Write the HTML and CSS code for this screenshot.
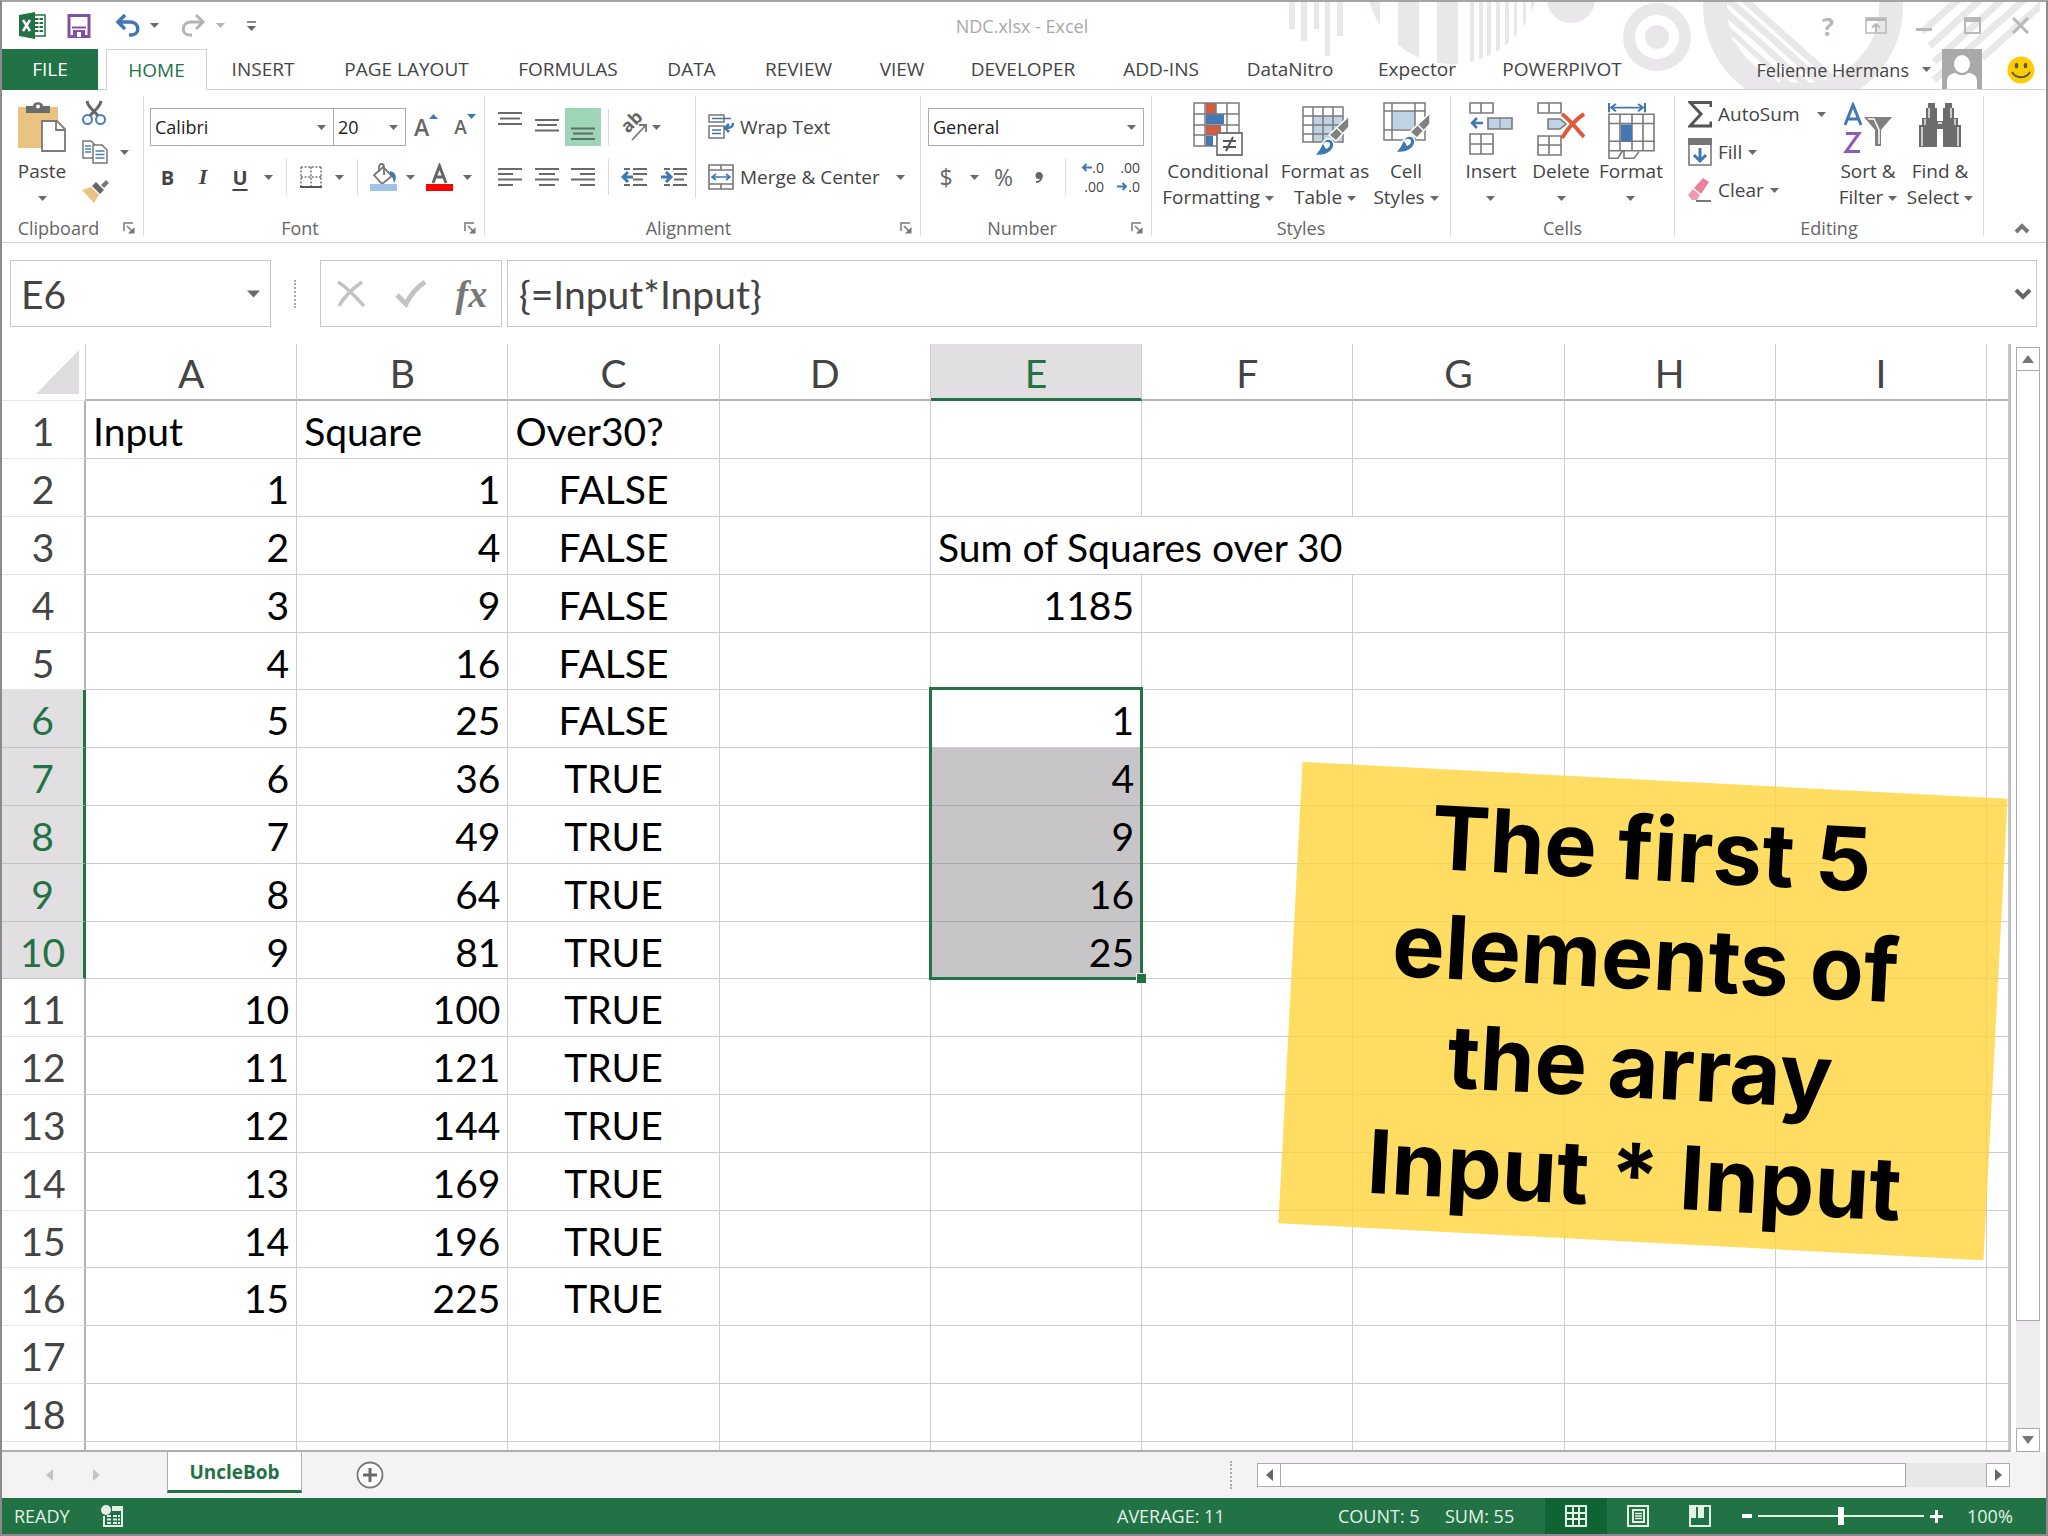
FILE: index.html
```html
<!DOCTYPE html>
<html lang="en">
<head>
<meta charset="utf-8">
<title>NDC.xlsx - Excel</title>
<link rel="stylesheet" href="styles.css">
</head>
<body>
<svg class="defs" width="0" height="0" aria-hidden="true">
  <symbol id="caret" viewBox="0 0 9 5"><path d="M0 0h9L4.500 5z" fill="#6a6a6a"/></symbol>
  <symbol id="launch" viewBox="0 0 12 12"><path d="M1 9V1h9" fill="none" stroke="#777" stroke-width="1.500"/><path d="M4 4l5 5" stroke="#777" stroke-width="1.500"/><path d="M11.500 5v6.500H5z" fill="#777"/></symbol>
</svg>
<div class="app">
  <header class="top">
    <svg class="backdrop" width="770" height="87" viewBox="0 0 770 87" aria-hidden="true">
      <defs>
        <clipPath id="disc"><circle cx="182" cy="-24" r="86"/></clipPath>
        <clipPath id="hole"><circle cx="533" cy="5" r="80"/></clipPath>
      </defs>
      <g fill="#e9e7e9">
        <path d="M19 0h6v27h-6zM31 0h6v39h-6zM44 0h5v27h-5zM55 0h5v54h-5zM67 0h6v34h-6z"/>
        <path clip-path="url(#disc)" d="M96 0h14v60H96zM128 0h21v80h-21zM167 0h21v80h-21zM200 0h4v80h-4zM209 0h4v80h-4zM217 0h4v80h-4zM226 0h4v80h-4zM235 0h4v80h-4zM244 0h3v80h-3zM253 0h3v80h-3zM261 0h3v80h-3z"/>
        <circle cx="301" cy="-3" r="24"/>
      </g>
      <g fill="none" stroke="#e9e7e9">
        <circle cx="387" cy="35" r="28" stroke-width="12"/>
        <circle cx="387" cy="35" r="6" stroke-width="12"/>
        <circle cx="533" cy="5" r="88" stroke-width="24"/>
        <path clip-path="url(#hole)" stroke-width="7" d="M440 12l80 72M440-4l100 90M452-8l110 98M468-8l105 94"/>
        <path stroke-width="7" d="M690-4l-38 34M712-4l-52 48M734-4l-70 64M756-4l-92 82M772 2l-60 54"/>
      </g>
      <path stroke="#fff" stroke-width="3" d="M462 36l48 44M474 32l50 46M492 34l44 40"/>
    </svg>
    <div class="titlebar">
      <div class="quick">
        <svg class="logo" width="28" height="27" viewBox="0 0 28 27" role="img" aria-label="Excel"><path d="M15 3h12v21H15z" fill="#fff" stroke="#217346" stroke-width="1.500"/><path d="M17 7h8M17 11h8M17 15h8M17 19h8" stroke="#217346" stroke-width="2"/><path d="M21 4v19" stroke="#fff"/><path d="M1 3L17 0v27L1 24z" fill="#217346"/><path d="M5 8l7 11M12 8L5 19" stroke="#fff" stroke-width="2.500"/></svg>
        <button class="q-save" aria-label="Save"><svg width="24" height="24" viewBox="0 0 24 24"><path d="M2 1.500h20v21H2z" fill="#fff" stroke="#8151a8" stroke-width="3"/><path d="M5 13.500h14" stroke="#8151a8" stroke-width="2"/><path d="M6 16h12v7H6z" fill="#8151a8"/><path d="M10 18h4v5h-4z" fill="#fff"/></svg></button>
        <button class="q-undo" aria-label="Undo"><svg width="25" height="23" viewBox="0 0 25 23"><path d="M3 8h13c9 1 9 13 0 13h-2" fill="none" stroke="#3f78b3" stroke-width="3.500"/><path d="M10 1L3 8l7 7" fill="none" stroke="#3f78b3" stroke-width="3.500"/></svg><svg width="9" height="5"><use href="#caret"/></svg></button>
        <button class="q-redo" aria-label="Redo"><svg width="25" height="23" viewBox="0 0 25 23"><path d="M22 8H9c-9 1-9 13 0 13h2" fill="none" stroke="#b4b4b4" stroke-width="3"/><path d="M15 1l7 7-7 7" fill="none" stroke="#b4b4b4" stroke-width="3"/></svg><svg class="dim" width="9" height="5"><use href="#caret"/></svg></button>
        <button class="q-more" aria-label="Customize"><svg width="9" height="10" viewBox="0 0 9 10"><path d="M0 1h9" stroke="#666" stroke-width="1.500"/><path d="M0 5h9L4.500 10z" fill="#666"/></svg></button>
      </div>
      <h1>NDC.xlsx - Excel</h1>
      <div class="window-buttons">
        <button aria-label="Help">?</button>
        <button aria-label="Ribbon options"><svg width="22" height="17" viewBox="0 0 22 17"><path d="M1 1h20v15H1z" fill="none" stroke="#b9b7b9" stroke-width="1.500"/><path d="M1 1h20v3H1z" fill="#b9b7b9"/><path d="M11 15V7M7 10.500L11 7l4 3.500" fill="none" stroke="#b9b7b9" stroke-width="2"/></svg></button>
        <button aria-label="Minimize"><svg width="16" height="17"><path d="M0 11h16v3H0z" fill="#b9b7b9"/></svg></button>
        <button aria-label="Maximize"><svg width="17" height="17"><path d="M1 1h15v15H1z" fill="none" stroke="#b9b7b9" stroke-width="2"/><path d="M0 0h17v5H0z" fill="#b9b7b9"/></svg></button>
        <button aria-label="Close"><svg width="17" height="17"><path d="M1 1l15 15M16 1L1 16" stroke="#b9b7b9" stroke-width="3"/></svg></button>
      </div>
    </div>
    <nav class="tabs">
      <a class="file" href="#file">FILE</a>
      <a class="home" href="#home">HOME</a>
      <a href="#insert">INSERT</a>
      <a href="#layout">PAGE LAYOUT</a>
      <a href="#formulas">FORMULAS</a>
      <a href="#data">DATA</a>
      <a href="#review">REVIEW</a>
      <a href="#view">VIEW</a>
      <a href="#developer">DEVELOPER</a>
      <a href="#addins">ADD-INS</a>
      <a href="#datanitro">DataNitro</a>
      <a href="#expector">Expector</a>
      <a href="#powerpivot">POWERPIVOT</a>
      <div class="account">
        <button class="user">Felienne Hermans <svg width="9" height="5"><use href="#caret"/></svg></button>
        <svg width="40" height="40" viewBox="0 0 40 40" role="img" aria-label="Profile"><path d="M0 0h40v40H0z" fill="#aaa8aa"/><ellipse cx="20" cy="15" rx="8" ry="9" fill="#fff"/><path d="M5 40V32c0-6 5-8 9-8 3 3 9 3 12 0 4 0 9 2 9 8v8z" fill="#fff"/></svg>
        <svg class="smiley" width="28" height="28" viewBox="0 0 28 28" role="img" aria-label="Send a smile"><circle cx="14" cy="14" r="13.500" fill="#fc0"/><ellipse cx="9.500" cy="9.500" rx="1.800" ry="2.800" fill="#555"/><ellipse cx="18.500" cy="9.500" rx="1.800" ry="2.800" fill="#555"/><path d="M5 16c4 7 14 7 18 0" fill="none" stroke="#555" stroke-width="1.800"/></svg>
      </div>
    </nav>
  </header>

  <section class="ribbon" aria-label="Home ribbon">
    <div class="group g-clip">
      <div class="body">
        <button class="big"><span class="pic"><svg width="48" height="50" viewBox="0 0 48 50"><path d="M0 5h40v41H0z" fill="#eac282"/><path d="M8 4h7c0-5 10-5 10 0h7v7H8z" fill="#6b6b6b"/><circle cx="20" cy="4.500" r="2" fill="#fff"/><path d="M24 19h15l8 8v22H24z" fill="#fff" stroke="#7a7a7a" stroke-width="1.800"/><path d="M38 19v9h9" fill="none" stroke="#7a7a7a" stroke-width="1.800"/></svg></span>Paste<br><svg width="9" height="5"><use href="#caret"/></svg></button>
        <div class="clip-tools">
          <button aria-label="Cut"><svg width="24" height="26" viewBox="0 0 24 26"><path d="M5 1c1 7 9 11 11 15M19 1C18 8 10 12 8 16" fill="none" stroke="#666" stroke-width="3"/><circle cx="5.500" cy="19.500" r="4.500" fill="none" stroke="#4a7fb8" stroke-width="2"/><circle cx="18.500" cy="19.500" r="4.500" fill="none" stroke="#4a7fb8" stroke-width="2"/></svg></button>
          <button aria-label="Copy"><svg width="26" height="24" viewBox="0 0 26 24"><path d="M1 1h8l4 4v13H1z" fill="#fff" stroke="#777" stroke-width="1.500"/><path d="M3 6h6M3 9h6M3 12h6" stroke="#4a7fb8" stroke-width="1.500"/><path d="M11 5h9l5 5v13H11z" fill="#fff" stroke="#777" stroke-width="1.500"/><path d="M13.500 11h9M13.500 14.500h9M13.500 18h9" stroke="#4a7fb8" stroke-width="1.500"/></svg><svg width="9" height="5"><use href="#caret"/></svg></button>
          <button aria-label="Format painter"><svg width="28" height="24" viewBox="0 0 28 24"><path d="M0 11l9-3 8 8-5 8z" fill="#eac282"/><path d="M10 7l4-4 8 8-4 4z" fill="#666"/><path d="M19 6l5-5 3 3-5 5z" fill="#777"/></svg></button>
        </div>
      </div>
      <div class="label"><span>Clipboard</span><button aria-label="Clipboard settings"><svg width="12" height="12"><use href="#launch"/></svg></button></div>
    </div>

    <div class="group g-font">
      <div class="body rows">
        <div class="row font-a">
          <span class="combo"><select aria-label="Font"><option>Calibri</option></select><svg width="9" height="5"><use href="#caret"/></svg></span>
          <span class="combo"><select aria-label="Font size"><option>20</option></select><svg width="9" height="5"><use href="#caret"/></svg></span>
          <button class="grow" aria-label="Increase font size">A<svg width="9" height="5" viewBox="0 0 9 5"><path d="M0 5h9L4.500 0z" fill="#3f78b3"/></svg></button>
          <button class="shrink" aria-label="Decrease font size">A<svg width="9" height="5" viewBox="0 0 9 5"><path d="M0 0h9L4.500 5z" fill="#3f78b3"/></svg></button>
        </div>
        <div class="row font-b">
          <button><b>B</b></button>
          <button><i>I</i></button>
          <button><u>U</u></button>
          <button aria-label="Underline style"><svg width="9" height="5"><use href="#caret"/></svg></button>
          <span class="sep"></span>
          <button aria-label="Borders"><svg width="22" height="22" viewBox="0 0 22 22"><path d="M1 1h20M1 11h20M1 1v19M11 1v19M21 1v19" stroke="#777" stroke-width="1.500" stroke-dasharray="2 1.600"/><path d="M0 21h22" stroke="#555" stroke-width="2"/></svg></button>
          <button aria-label="Border style"><svg width="9" height="5"><use href="#caret"/></svg></button>
          <span class="sep"></span>
          <button aria-label="Fill color"><svg width="27" height="28" viewBox="0 0 27 28"><path d="M13 4l9 9-10 8-8-9z" fill="#fff" stroke="#777" stroke-width="1.800"/><path d="M9 9V4c0-4 5-4 5 0v8" fill="none" stroke="#777" stroke-width="1.800"/><path d="M20 8c7 1 7 8 4 12-1-5-2-7-4-8z" fill="#3f78b3"/><path d="M0 21h27v7H0z" fill="#9dc3e6"/></svg></button>
          <button aria-label="Fill colors"><svg width="9" height="5"><use href="#caret"/></svg></button>
          <button aria-label="Font color"><svg width="27" height="28" viewBox="0 0 27 28"><path d="M7 20l6.500-17L20 20M9 14h9" fill="none" stroke="#666" stroke-width="3"/><path d="M0 21h27v7H0z" fill="#f00"/></svg></button>
          <button aria-label="Font colors"><svg width="9" height="5"><use href="#caret"/></svg></button>
        </div>
      </div>
      <div class="label"><span>Font</span><button aria-label="Font settings"><svg width="12" height="12"><use href="#launch"/></svg></button></div>
    </div>

    <div class="group g-align">
      <div class="body">
        <div class="rows align-left">
          <div class="row align-a">
            <button aria-label="Top align"><svg width="24" height="38" viewBox="0 0 24 38"><path d="M0 5h24M2 10.500h20M0 16h24" stroke="#6a6a6a" stroke-width="2"/></svg></button>
            <button aria-label="Middle align"><svg width="24" height="38" viewBox="0 0 24 38"><path d="M0 12h24M2 17h20M0 22.500h24" stroke="#6a6a6a" stroke-width="2"/></svg></button>
            <button class="on" aria-label="Bottom align"><svg width="24" height="38" viewBox="0 0 24 38"><path d="M0 20.500h24M2 25.500h20M0 31h24" stroke="#5f6f66" stroke-width="2"/></svg></button>
            <span class="sep"></span>
            <button class="orient" aria-label="Orientation"><svg width="32" height="34" viewBox="-2 -5 32 34"><text x="0" y="0" transform="translate(8 19) rotate(-45)" class="ab">ab</text><path d="M12 25L26 10M19 10h7v7" fill="none" stroke="#777" stroke-width="1.800"/></svg></button>
            <button class="start" aria-label="Orientations"><svg width="9" height="5"><use href="#caret"/></svg></button>
          </div>
          <div class="row align-a">
            <button aria-label="Align left"><svg width="24" height="20" viewBox="0 0 24 20"><path d="M0 2h24M0 7h15M0 12.500h24M0 18h15" stroke="#6a6a6a" stroke-width="2"/></svg></button>
            <button aria-label="Center"><svg width="24" height="20" viewBox="0 0 24 20"><path d="M0 2h24M4 7h16M0 12.500h24M4 18h16" stroke="#6a6a6a" stroke-width="2"/></svg></button>
            <button aria-label="Align right"><svg width="24" height="20" viewBox="0 0 24 20"><path d="M0 2h24M9 7h15M0 12.500h24M9 18h15" stroke="#6a6a6a" stroke-width="2"/></svg></button>
            <span class="sep"></span>
            <button aria-label="Decrease indent"><svg width="26" height="20" viewBox="0 0 26 20"><path d="M3 2h6M12 2h14M12 7h14M12 12.500h10M3 18h6M12 18h14" stroke="#6a6a6a" stroke-width="2"/><path d="M12 10H2M7 5l-5 5 5 5" fill="none" stroke="#3f78b3" stroke-width="3"/></svg></button>
            <button aria-label="Increase indent"><svg width="26" height="20" viewBox="0 0 26 20"><path d="M3 2h6M12 2h14M13 7h13M13 12.500h10M3 18h6M12 18h14" stroke="#6a6a6a" stroke-width="2"/><path d="M0 10h10M5 5l5 5-5 5" fill="none" stroke="#3f78b3" stroke-width="3"/></svg></button>
          </div>
        </div>
        <div class="rows align-right">
          <div class="row"><button class="wide"><svg width="26" height="26" viewBox="0 0 26 26"><path d="M1 1h15v7H1zM1 12h15v12H1z" fill="#fff" stroke="#777" stroke-width="1.500"/><path d="M4 4.500h19M4 16h9M4 19.500h9" stroke="#3f78b3" stroke-width="1.500"/><path d="M25 9c0 4-2 5-7 5M21 10l-4 4 4 4" fill="none" stroke="#3f78b3" stroke-width="2.500"/></svg>Wrap Text</button></div>
          <div class="row"><button class="wide"><svg width="26" height="26" viewBox="0 0 26 26"><path d="M1 1h24v24H1zM1 6h24M1 20h24M13 1v5M13 20v5" fill="none" stroke="#777" stroke-width="1.600"/><path d="M5 13h16M8 10l-4 3 4 3M18 10l4 3-4 3" fill="none" stroke="#3f78b3" stroke-width="1.600"/></svg>Merge &amp; Center</button><button class="merge-more" aria-label="Merge options"><svg width="9" height="5"><use href="#caret"/></svg></button></div>
        </div>
      </div>
      <div class="label"><span>Alignment</span><button aria-label="Alignment settings"><svg width="12" height="12"><use href="#launch"/></svg></button></div>
    </div>

    <div class="group g-num">
      <div class="body rows">
        <div class="row"><span class="combo full"><select aria-label="Number format"><option>General</option></select><svg width="9" height="5"><use href="#caret"/></svg></span></div>
        <div class="row num-b">
          <button class="sign">$</button>
          <button aria-label="Currencies"><svg width="9" height="5"><use href="#caret"/></svg></button>
          <button class="sign">%</button>
          <button class="comma" aria-label="Comma style"><svg width="8" height="11" viewBox="0 0 8 11"><circle cx="4" cy="3.500" r="3.500" fill="#666"/><path d="M7 3c0 5-3 7-6 7" fill="none" stroke="#666" stroke-width="2"/></svg></button>
          <span class="sep"></span>
          <button class="dec"><span><svg width="11" height="9" viewBox="0 0 11 9"><path d="M11 4.500H2M5.500 1L2 4.500 5.500 8" fill="none" stroke="#3f78b3" stroke-width="2"/></svg>.0</span><span>.00</span></button>
          <button class="dec"><span>.00</span><span><svg width="11" height="9" viewBox="0 0 11 9"><path d="M0 4.500h9M5.500 1L9 4.500 5.500 8" fill="none" stroke="#3f78b3" stroke-width="2"/></svg>.0</span></button>
        </div>
      </div>
      <div class="label"><span>Number</span><button aria-label="Number settings"><svg width="12" height="12"><use href="#launch"/></svg></button></div>
    </div>

    <div class="group g-styles">
      <div class="body">
        <button class="big"><span class="pic"><svg width="50" height="54" viewBox="0 0 50 54"><path d="M1 1h45v43H1z" fill="#fff"/><path d="M13 1h10v11H13zM13 23h15v10H13z" fill="#d35b40"/><path d="M13 12h18v10H13zM13 34h7v10h-7z" fill="#4478b0"/><path d="M1 1h45v43H1zM1 12h45M1 23h45M1 33h45M12 1v43M34 1v43M23 1v11" fill="none" stroke="#7a7a7a" stroke-width="1.500"/><path d="M24 31h25v22H24z" fill="#fff" stroke="#777" stroke-width="1.800"/><path d="M30 39h13M30 45h13M40 35l-7 14" stroke="#555" stroke-width="2"/></svg></span>Conditional<br>Formatting <svg width="9" height="5"><use href="#caret"/></svg></button>
        <button class="big"><span class="pic"><svg width="50" height="54" viewBox="0 0 50 54"><path d="M3 5h40v35H3z" fill="#fff"/><path d="M13 14h30v26H13z" fill="#c0d3e6"/><path d="M3 5h40v35H3zM3 14h40M3 23h40M3 32h40M13 5v35M23 5v35M33 5v35" fill="none" stroke="#7a7a7a" stroke-width="1.500"/><path d="M49 14v11L36 39l-7-6z" fill="#808080" stroke="#fff" stroke-width="1.500"/><path d="M37 26l6 6" stroke="#fff" stroke-width="1.500"/><path d="M13 53c8-2 7-14 14-16 7-1 9 7 4 12-5 5-11 5-18 4z" fill="#3f78b3" stroke="#fff" stroke-width="1.500"/><path d="M23 42c2-3 6-3 7 0 0 3-2 4-4 5z" fill="#fff"/></svg></span>Format as<br>Table <svg width="9" height="5"><use href="#caret"/></svg></button>
        <button class="big"><span class="pic"><svg width="50" height="54" viewBox="0 0 50 54"><path d="M3 1h41v37H3z" fill="#fff"/><path d="M11 9h23v18H11z" fill="#c0d3e6"/><path d="M3 1h41v37H3zM3 9h41M3 28h41M11 1v37M34 1v37" fill="none" stroke="#7a7a7a" stroke-width="1.500"/><path d="M49 11v11L36 36l-7-6z" fill="#808080" stroke="#fff" stroke-width="1.500"/><path d="M37 23l6 6" stroke="#fff" stroke-width="1.500"/><path d="M13 50c8-2 7-14 14-16 7-1 9 7 4 12-5 5-11 5-18 4z" fill="#3f78b3" stroke="#fff" stroke-width="1.500"/><path d="M23 39c2-3 6-3 7 0 0 3-2 4-4 5z" fill="#fff"/></svg></span>Cell<br>Styles <svg width="9" height="5"><use href="#caret"/></svg></button>
      </div>
      <div class="label"><span>Styles</span></div>
    </div>

    <div class="group g-cells">
      <div class="body">
        <button class="big"><span class="pic"><svg width="44" height="54" viewBox="0 0 44 54"><path d="M1 1h23v10H1zM12 1v10M1 32h23v20H1zM12 32v20M1 42h23" fill="none" stroke="#7a7a7a" stroke-width="1.600"/><path d="M19 16h24v11H19z" fill="#c0d3e6" stroke="#7a7a7a" stroke-width="1.600"/><path d="M31 16v11" stroke="#7a7a7a"/><path d="M14 21H3M8 16l-5 5 5 5" fill="none" stroke="#3f78b3" stroke-width="2.500"/></svg></span>Insert<br><svg width="9" height="5"><use href="#caret"/></svg></button>
        <button class="big"><span class="pic"><svg width="48" height="54" viewBox="0 0 48 54"><path d="M1 1h23v10H1zM12 1v10M1 34h23v19H1zM12 34v19M1 43h23" fill="none" stroke="#7a7a7a" stroke-width="1.600"/><path d="M11 17h12l6 5-6 5H11z" fill="#c0d3e6" stroke="#7a7a7a" stroke-width="1.600"/><path d="M25 12c9 7 14 14 22 23M47 12C38 18 31 26 25 36" fill="none" stroke="#e0593c" stroke-width="4"/></svg></span>Delete<br><svg width="9" height="5"><use href="#caret"/></svg></button>
        <button class="big"><span class="pic"><svg width="48" height="58" viewBox="0 0 48 62" preserveAspectRatio="none"><path d="M2 1v10M38 1v10M4 6h32M9 2L4 6l5 4M31 2l5 4-5 4" fill="none" stroke="#3f78b3" stroke-width="2"/><path d="M2 13h45v39H2zM2 23h45M2 42h45M13 13v39M25 13v39M36 13v39" fill="none" stroke="#7a7a7a" stroke-width="1.600"/><path d="M14 24h11v18H14z" fill="#4478b0"/><path d="M2 52v8h9l4-7h2v7h10l5-7" fill="none" stroke="#7a7a7a" stroke-width="1.600"/></svg></span>Format<br><svg width="9" height="5"><use href="#caret"/></svg></button>
      </div>
      <div class="label"><span>Cells</span></div>
    </div>

    <div class="group g-edit">
      <div class="body">
        <div class="edit-tools">
          <button class="wide autosum"><svg width="24" height="27" viewBox="0 0 24 27"><path d="M23 6V1.500H2L13 13 2 25h21v-4.500" fill="none" stroke="#555" stroke-width="3"/></svg><span>AutoSum</span><svg class="end" width="9" height="5"><use href="#caret"/></svg></button>
          <button class="wide"><svg width="24" height="28" viewBox="0 0 24 28"><path d="M1 1h22v26H1z" fill="#fff" stroke="#777" stroke-width="1.600"/><path d="M0 0h24v7H0z" fill="#777"/><path d="M12 10v13M6 17l6 6 6-6" fill="none" stroke="#3f78b3" stroke-width="3"/></svg>Fill<svg width="9" height="5"><use href="#caret"/></svg></button>
          <button class="wide"><svg width="24" height="24" viewBox="0 0 24 24"><path d="M6 10L15 0l6 4-8 12z" fill="#ec7f9e"/><path d="M5 11l7 6-3 5H4l-4-5z" fill="#f09ab2"/><path d="M8 23h15" stroke="#777" stroke-width="2"/></svg>Clear<svg width="9" height="5"><use href="#caret"/></svg></button>
        </div>
        <button class="big"><span class="pic"><svg width="50" height="52" viewBox="0 0 50 52"><path d="M2 23L10 3l8 20M5 17h10" fill="none" stroke="#3f78b3" stroke-width="3"/><path d="M3 31.500h13L3 49.500h14" fill="none" stroke="#8d5bb5" stroke-width="3"/><path d="M21 15h28L38 28v16h-6V28z" fill="#808080"/><path d="M25 17h6l5 11v14" fill="none" stroke="#fff" stroke-width="1.500"/></svg></span>Sort &amp;<br>Filter <svg width="9" height="5"><use href="#caret"/></svg></button>
        <button class="big"><span class="pic"><svg width="44" height="46" viewBox="0 0 44 46"><path d="M10 1h7v5h2v13h6V6h2V1h7v5h2v10h4v7h3v22H25V27h-6v18H1V23h3v-7h4V6h2z" fill="#6d6b6d"/><path d="M11 6v10M7 17v6M4 25v19M33 6v10M37 17v6M40 25v19M20 21h4" stroke="#fff" stroke-width="1.300"/></svg></span>Find &amp;<br>Select <svg width="9" height="5"><use href="#caret"/></svg></button>
      </div>
      <div class="label"><span>Editing</span></div>
    </div>
    <button class="collapse" aria-label="Collapse ribbon"><svg width="16" height="12" viewBox="0 0 16 12"><path d="M2 10l6-6 6 6" fill="none" stroke="#777" stroke-width="4"/></svg></button>
  </section>

  <section class="formula-bar" aria-label="Formula bar">
    <div class="name-box"><input type="text" value="E6" aria-label="Name box"><button aria-label="Names"><svg width="13" height="8"><use href="#caret" width="13" height="8"/></svg></button></div>
    <span class="dots"></span>
    <div class="fx">
      <button aria-label="Cancel"><svg width="30" height="28" viewBox="0 0 30 28"><path d="M2 2c10 6 17 14 26 24M26 2C16 9 8 17 3 26" fill="none" stroke="#c4c2c4" stroke-width="3.500"/></svg></button>
      <button aria-label="Enter"><svg width="32" height="28" viewBox="0 0 32 28"><path d="M2 15l9 9C16 14 22 7 30 2" fill="none" stroke="#c4c2c4" stroke-width="5"/></svg></button>
      <button class="fn" aria-label="Insert function">fx</button>
    </div>
    <div class="formula"><input type="text" value="{=Input*Input}" aria-label="Formula"><button aria-label="Expand formula bar"><svg width="18" height="12" viewBox="0 0 18 12"><path d="M2 2l7 7 7-7" fill="none" stroke="#666" stroke-width="4"/></svg></button></div>
  </section>

  <main class="work">
    <div class="sheet">
      <table>
        <colgroup><col class="c-head"><col span="9"><col class="c-last"></colgroup>
        <thead><tr><th class="corner"><svg width="43" height="44" viewBox="0 0 43 44" aria-label="Select all"><path d="M43 0v44H0z" fill="#dedcde"/></svg></th><th>A</th><th>B</th><th>C</th><th>D</th><th class="sel">E</th><th>F</th><th>G</th><th>H</th><th>I</th><th></th></tr></thead>
        <tbody>
          <tr><th>1</th><td class="l">Input</td><td class="l">Square</td><td class="l">Over30?</td><td></td><td></td><td></td><td></td><td></td><td></td><td></td></tr>
          <tr><th>2</th><td>1</td><td>1</td><td class="c">FALSE</td><td></td><td></td><td></td><td></td><td></td><td></td><td></td></tr>
          <tr><th>3</th><td>2</td><td>4</td><td class="c">FALSE</td><td></td><td class="l" colspan="3">Sum of Squares over 30</td><td></td><td></td><td></td></tr>
          <tr><th>4</th><td>3</td><td>9</td><td class="c">FALSE</td><td></td><td>1185</td><td></td><td></td><td></td><td></td><td></td></tr>
          <tr><th>5</th><td>4</td><td>16</td><td class="c">FALSE</td><td></td><td></td><td></td><td></td><td></td><td></td><td></td></tr>
          <tr><th class="sel">6</th><td>5</td><td>25</td><td class="c">FALSE</td><td></td><td class="active">1<span class="selection"></span></td><td></td><td></td><td></td><td></td><td></td></tr>
          <tr><th class="sel">7</th><td>6</td><td>36</td><td class="c">TRUE</td><td></td><td class="picked">4</td><td></td><td></td><td></td><td></td><td></td></tr>
          <tr><th class="sel">8</th><td>7</td><td>49</td><td class="c">TRUE</td><td></td><td class="picked">9</td><td></td><td></td><td></td><td></td><td></td></tr>
          <tr><th class="sel">9</th><td>8</td><td>64</td><td class="c">TRUE</td><td></td><td class="picked">16</td><td></td><td></td><td></td><td></td><td></td></tr>
          <tr><th class="sel">10</th><td>9</td><td>81</td><td class="c">TRUE</td><td></td><td class="picked">25</td><td></td><td></td><td></td><td></td><td></td></tr>
          <tr><th>11</th><td>10</td><td>100</td><td class="c">TRUE</td><td></td><td></td><td></td><td></td><td></td><td></td><td></td></tr>
          <tr><th>12</th><td>11</td><td>121</td><td class="c">TRUE</td><td></td><td></td><td></td><td></td><td></td><td></td><td></td></tr>
          <tr><th>13</th><td>12</td><td>144</td><td class="c">TRUE</td><td></td><td></td><td></td><td></td><td></td><td></td><td></td></tr>
          <tr><th>14</th><td>13</td><td>169</td><td class="c">TRUE</td><td></td><td></td><td></td><td></td><td></td><td></td><td></td></tr>
          <tr><th>15</th><td>14</td><td>196</td><td class="c">TRUE</td><td></td><td></td><td></td><td></td><td></td><td></td><td></td></tr>
          <tr><th>16</th><td>15</td><td>225</td><td class="c">TRUE</td><td></td><td></td><td></td><td></td><td></td><td></td><td></td></tr>
          <tr><th>17</th><td></td><td></td><td></td><td></td><td></td><td></td><td></td><td></td><td></td><td></td></tr>
          <tr><th>18</th><td></td><td></td><td></td><td></td><td></td><td></td><td></td><td></td><td></td><td></td></tr>
          <tr class="cut"><th></th><td></td><td></td><td></td><td></td><td></td><td></td><td></td><td></td><td></td><td></td></tr>
        </tbody>
      </table>
      <aside class="note">The first 5<br>elements of<br>the array<br>Input * Input</aside>
    </div>
    <div class="vscroll">
      <button aria-label="Scroll up"><svg width="12" height="8" viewBox="0 0 12 8"><path d="M0 8h12L6 0z" fill="#777"/></svg></button>
      <div class="thumb"></div>
      <div class="track"></div>
      <button aria-label="Scroll down"><svg width="12" height="8" viewBox="0 0 12 8"><path d="M0 0h12L6 8z" fill="#777"/></svg></button>
    </div>
  </main>

  <footer class="sheet-tabs">
    <div class="nav">
      <button aria-label="Previous sheet"><svg width="7" height="12" viewBox="0 0 7 12"><path d="M7 0v12L0 6z" fill="#c4c4c4"/></svg></button>
      <button aria-label="Next sheet"><svg width="7" height="12" viewBox="0 0 7 12"><path d="M0 0v12l7-6z" fill="#c4c4c4"/></svg></button>
    </div>
    <a class="sheet-tab" href="#unclebob">UncleBob</a>
    <div class="add"><button aria-label="New sheet"><svg width="28" height="28" viewBox="0 0 28 28"><circle cx="14" cy="14" r="12.500" fill="#fff" stroke="#777" stroke-width="1.800"/><path d="M14 7v14M7 14h14" stroke="#6a6a6a" stroke-width="3"/></svg></button></div>
    <span class="dots short"></span>
    <div class="hscroll">
      <button aria-label="Scroll left"><svg width="7" height="12" viewBox="0 0 7 12"><path d="M7 0v12L0 6z" fill="#666"/></svg></button>
      <div class="thumb"></div>
      <div class="track"></div>
      <button aria-label="Scroll right"><svg width="7" height="12" viewBox="0 0 7 12"><path d="M0 0v12l7-6z" fill="#666"/></svg></button>
    </div>
  </footer>
  <footer class="status">
    <span class="ready">READY</span>
    <button aria-label="Record macro"><svg width="22" height="22" viewBox="0 0 22 22"><circle cx="5" cy="5" r="5" fill="#e4f0e6"/><path d="M11 1h11v5H11z" fill="#e4f0e6"/><path d="M3 11v10h18V6" fill="none" stroke="#e4f0e6" stroke-width="2"/><path d="M6 11h4M12 11h4M6 14.500h4M12 14.500h4M6 18h4M12 18h4M17 11h2M17 14.500h2M17 18h2" stroke="#e4f0e6" stroke-width="2"/></svg></button>
    <span class="average">AVERAGE: 11</span>
    <span class="count">COUNT: 5</span>
    <span class="sum">SUM: 55</span>
    <div class="views">
      <button class="on" aria-label="Normal view"><svg width="22" height="22" viewBox="0 0 22 22"><path d="M1 1h20v20H1zM1 8h20M1 14h20M8 1v20M14 1v20" fill="none" stroke="#e4f0e6" stroke-width="2"/></svg></button>
      <button aria-label="Page layout view"><svg width="22" height="22" viewBox="0 0 22 22"><path d="M1 1h20v20H1zM6 5h11v12H6z" fill="none" stroke="#e4f0e6" stroke-width="2"/><path d="M8 8.500h7M8 11h7M8 13.500h7" stroke="#e4f0e6" stroke-width="1.400"/></svg></button>
      <button aria-label="Page break view"><svg width="22" height="22" viewBox="0 0 22 22"><path d="M1 1h20v20H1z" fill="none" stroke="#e4f0e6" stroke-width="2"/><path d="M1 1h6v12H1zM9 1h6v12H9z" fill="#e4f0e6"/></svg></button>
    </div>
    <div class="zoom">
      <button aria-label="Zoom out"><svg width="10" height="4"><path d="M0 0h10v4H0z" fill="#fff"/></svg></button>
      <input type="range" min="0" max="100" value="50" aria-label="Zoom">
      <button aria-label="Zoom in"><svg width="13" height="13" viewBox="0 0 13 13"><path d="M6.500 0v13M0 6.500h13" stroke="#fff" stroke-width="3"/></svg></button>
      <span>100%</span>
    </div>
  </footer>
</div>
</body>
</html>
```
FILE: styles.css
```css
* { box-sizing: border-box; }
body { margin: 0; background: #fff; color: #444; font-family: "Open Sans", sans-serif; font-size: 19px; }
button { margin: 0; padding: 0; border: 0; background: none; color: inherit; font: inherit; display: flex; align-items: center; justify-content: center; white-space: nowrap; }
input, select { font: inherit; color: inherit; border: 0; margin: 0; background: none; outline: 0; border-radius: 0; }
a { color: inherit; text-decoration: none; }
svg { flex: none; }
.defs { position: absolute; }

.app { min-height: 100vh; display: flex; flex-direction: column; border: 2px solid #8c8a8c; border-top-color: #a5a3a5; overflow: hidden; }

/* title bar and tabs */
.top { position: relative; }
.backdrop { position: absolute; top: 0; right: 6px; }
.titlebar { position: relative; display: grid; grid-template-columns: 1fr auto 1fr; align-items: center; height: 47px; padding-right: 4px; }
.titlebar h1 { margin: 0; font-size: 18px; font-weight: 400; color: #aaa8aa; }
.quick { display: flex; align-items: center; padding-left: 16px; }
.q-save { margin-left: 21px; }
.q-undo { margin-left: 24px; gap: 10px; }
.q-redo { margin-left: 22px; gap: 10px; }
.q-more { margin-left: 22px; }
.dim { opacity: .5; }
.window-buttons { display: flex; justify-content: flex-end; margin-right: -2px; color: #b9b7b9; font-size: 25px; font-weight: 700; line-height: 24px; }
.window-buttons button { width: 48px; }
.tabs { position: relative; display: grid; grid-template-columns: 96px 8px 101px 112px 175px 148px 99px 115px 92px 150px 126px 132px 122px 168px 1fr; height: 41px; border-bottom: 1px solid #d5d2d5; font-size: 19px; line-height: 40px; text-align: center; }
.tabs .file { background: #217346; color: #fff; }
.tabs .home { grid-column: 3; height: 41px; background: #fff; border: 1px solid #d5d2d5; border-bottom: 0; color: #217346; }
.account { display: flex; justify-content: flex-end; padding-right: 11px; font-size: 18px; line-height: 38px; }
.user { gap: 13px; margin-right: 11px; }
.smiley { align-self: center; margin-left: 25px; }

/* ribbon */
.ribbon { display: flex; height: 153px; border-bottom: 1px solid #d5d2d5; }
.group { display: flex; flex-direction: column; margin: 6px 0; border-right: 1px solid #dcd9dc; }
.g-clip { width: 142px; }
.g-font { width: 341px; }
.g-align { width: 436px; }
.g-num { width: 231px; }
.g-styles { width: 299px; }
.g-cells { width: 224px; }
.g-edit { width: 309px; }
.body { flex: 1; display: flex; }
.rows { display: flex; flex-direction: column; gap: 12px; padding-top: 12px; }
.row { display: flex; height: 38px; }
.label { display: flex; height: 16px; line-height: 16px; font-size: 18px; color: #666; text-align: center; }
.label span { flex: 1; }
.label button { width: 28px; }
.big { display: block; align-self: start; line-height: 26px; text-align: center; }
.big svg { vertical-align: middle; }
.pic { display: flex; height: 62px; padding-top: 6px; align-items: flex-start; justify-content: center; }
.sep { justify-self: center; width: 1px; height: 36px; background: #dcd9dc; }

.g-clip .big { width: 80px; }
.clip-tools { display: flex; flex-direction: column; gap: 13px; padding-top: 4px; align-items: flex-start; }
.clip-tools button { gap: 12px; height: 26px; }

.g-font .rows { padding-left: 6px; }
.font-a { display: grid; grid-template-columns: 183px 72px 42px 36px; }
.font-b { display: grid; grid-template-columns: 35px 36px 38px 18px 18px 32px 24px 12px 40px 15px 42px 14px; align-items: center; font-size: 20px; }
.font-b i { font-family: "Liberation Serif", serif; font-weight: 700; font-size: 22px; }
.font-b u { font-weight: 700; text-underline-offset: 4px; }
.combo { position: relative; display: block; height: 38px; border: 1px solid #ababab; margin-right: -1px; color: #222; background: #fff; }
.combo select { appearance: none; width: 100%; height: 36px; padding: 0 20px 0 4px; font-size: 18px; }
.combo svg { position: absolute; right: 7px; top: 16px; pointer-events: none; }
.combo.full { width: 216px; }
.grow, .shrink { font-weight: 600; color: #666; }
.grow { font-size: 23px; }
.shrink { font-size: 19px; }
.grow svg, .shrink svg { align-self: flex-start; margin-top: 6px; }

.align-left { height: 102px; padding-left: 7px; border-right: 1px solid #dcd9dc; }
.align-a { display: grid; grid-template-columns: 36px 37px 36px 14px 37px 43px; align-items: center; }
.align-a .on { height: 38px; background: #9fd5b7; }
.align-a .start { justify-content: flex-start; }
.ab { font: 700 18px "Open Sans", sans-serif; fill: #666; }
.align-right { padding-left: 12px; }
.wide { gap: 6px; }
.merge-more { margin-left: 16px; }

.g-num .rows { padding-left: 7px; }
.num-b { display: grid; grid-template-columns: 36px 20px 39px 32px 20px 30px 36px; align-items: center; }
.sign { font-size: 23px; color: #666; }
.dec { flex-direction: column; align-items: flex-end; font-size: 14px; line-height: 19px; padding-right: 1px; }
.dec span { display: flex; align-items: center; }

.g-styles .body { display: grid; grid-template-columns: 116px 98px 64px; padding-left: 8px; justify-items: center; }
.g-cells .body { display: grid; grid-template-columns: 66px 74px 66px; padding-left: 7px; justify-items: center; }
.g-edit .body { display: grid; grid-template-columns: 138px 84px 60px; padding-left: 13px; justify-items: center; }
.edit-tools { display: flex; flex-direction: column; gap: 2px; justify-self: stretch; align-items: flex-start; }
.edit-tools button { height: 36px; }
.edit-tools .autosum { width: 100%; justify-content: flex-start; }
.end { margin-left: auto; }
.collapse { align-self: flex-end; margin: 0 16px 8px auto; }

/* formula bar */
.formula-bar { display: flex; height: 101px; padding: 17px 9px 17px 8px; font-family: Lato, sans-serif; font-size: 39px; }
.name-box, .fx, .formula { display: flex; border: 1px solid #c8c6c8; }
.name-box { width: 261px; padding: 0 10px; }
.name-box input { flex: 1; min-width: 0; padding: 0; }
.dots { width: 2px; height: 28px; align-self: center; border-left: 2px dotted #aaa; }
.name-box + .dots { margin: 0 24px 0 23px; }
.fx { width: 182px; gap: 1px; margin-right: 5px; }
.fx button { width: 60px; }
.fx .fn { font: italic 700 38px "Liberation Serif", serif; color: #777; }
.formula { flex: 1; padding: 0 4px 0 11px; }
.formula input { flex: 1; min-width: 0; padding: 0; }

/* sheet */
.work { flex: 1; display: flex; min-height: 0; }
.sheet { position: relative; flex: 1; overflow: hidden; border-right: 2px solid #c0bec0; border-bottom: 2px solid #b0aeb0; }
.sheet table { width: 100%; table-layout: fixed; border-spacing: 0; font-family: Lato, sans-serif; font-size: 39px; line-height: 48px; color: #000; }
.c-head { width: 84px; }
.c-last { width: 22px; }
.sheet th, .sheet td { padding: 3px 7px 0; border-right: 1px solid #cfccd0; border-bottom: 1px solid #cfccd0; white-space: nowrap; overflow: hidden; }
.sheet th { font-weight: 400; color: #444; padding: 3px 0 0; }
.sheet td { text-align: right; }
.sheet .l { text-align: left; }
.sheet .c { text-align: center; }
.sheet thead th { height: 57px; border-bottom: 2px solid #b5b3b5; }
.sheet thead .corner { padding: 0 6px 0 0; text-align: right; line-height: 0; border-bottom: 1px solid #e6e4e6; }
.sheet tbody th { border-right: 2px solid #b5b3b5; border-bottom-color: #e6e4e6; }
.sheet tbody tr { height: 58px; }
.sheet tbody tr:nth-child(5n) { height: 57px; }
.sheet tbody .cut { height: 8px; }
.cut th, .cut td { border-bottom: 0; }
.sheet .sel { background: #e1dfe1; color: #217346; }
.sheet thead .sel { border-bottom: 3px solid #217346; }
.sheet tbody .sel { border-right: 3px solid #217346; border-bottom-color: #c4c2c4; }
.sheet .picked { background: #c8c5c9; border-bottom-color: #aaa8aa; }
.sheet .active { position: relative; overflow: visible; }
.selection { position: absolute; left: -2px; right: -2px; top: -3px; height: 293px; border: 3px solid #217346; z-index: 1; }
.selection::after { content: ""; position: absolute; right: -6px; bottom: -6px; width: 9px; height: 9px; background: #217346; border: 1px solid #fff; border-width: 1px 0 0 1px; }
.note { position: absolute; right: 13px; top: 436px; width: 706px; height: 462px; padding-top: 14px; background: rgba(255, 212, 60, .8); color: #000; font: 700 88px/109px Inter, sans-serif; text-align: center; transform: rotate(3deg); z-index: 2; }

.vscroll { display: flex; flex-direction: column; width: 35px; padding: 3px 6px 0 5px; }
.vscroll button, .hscroll button { flex: none; width: 24px; height: 24px; border: 1px solid #ababab; background: #fff; }
.vscroll .thumb { flex: 951; border: 1px solid #ababab; border-top: 0; background: #fff; }
.vscroll .track { flex: 107; background: #eeecee; }

.sheet-tabs { display: flex; height: 46px; background: #f4f2f5; }
.nav { display: flex; align-items: center; gap: 40px; width: 165px; padding-left: 44px; }
.sheet-tab { width: 135px; height: 41px; background: #fff; border: 1px solid #b0aeb0; border-top: 0; border-bottom: 3px solid #217346; color: #217346; font-weight: 700; font-size: 19px; line-height: 41px; text-align: center; }
.add { display: flex; align-items: center; margin: 0 auto 0 54px; }
.hscroll { display: flex; align-items: center; width: 753px; margin: 0 36px 0 25px; }
.hscroll .thumb { flex: 625; height: 24px; border: 1px solid #ababab; border-left: 0; background: #fff; }
.hscroll .track { flex: 80; height: 24px; background: #e8e6e8; }

/* status bar */
.status { display: flex; align-items: center; height: 36px; padding: 0 33px 0 12px; background: #217346; color: #e4f0e6; font-size: 18px; }
.ready { width: 87px; }
.average { margin-left: auto; width: 221px; }
.count { width: 107px; }
.sum { width: 100px; }
.views { display: flex; align-self: stretch; }
.views button { width: 62px; }
.views .on { background: #0f6433; }
.zoom { display: flex; align-items: center; margin-left: 11px; }
.zoom input { appearance: none; width: 166px; height: 20px; margin: 0 6px; background: linear-gradient(#e4f0e6, #e4f0e6) center / 100% 2px no-repeat; }
.zoom input::-webkit-slider-thumb { appearance: none; width: 6px; height: 18px; background: #fff; }
.zoom span { width: 46px; margin-left: 24px; }
```
